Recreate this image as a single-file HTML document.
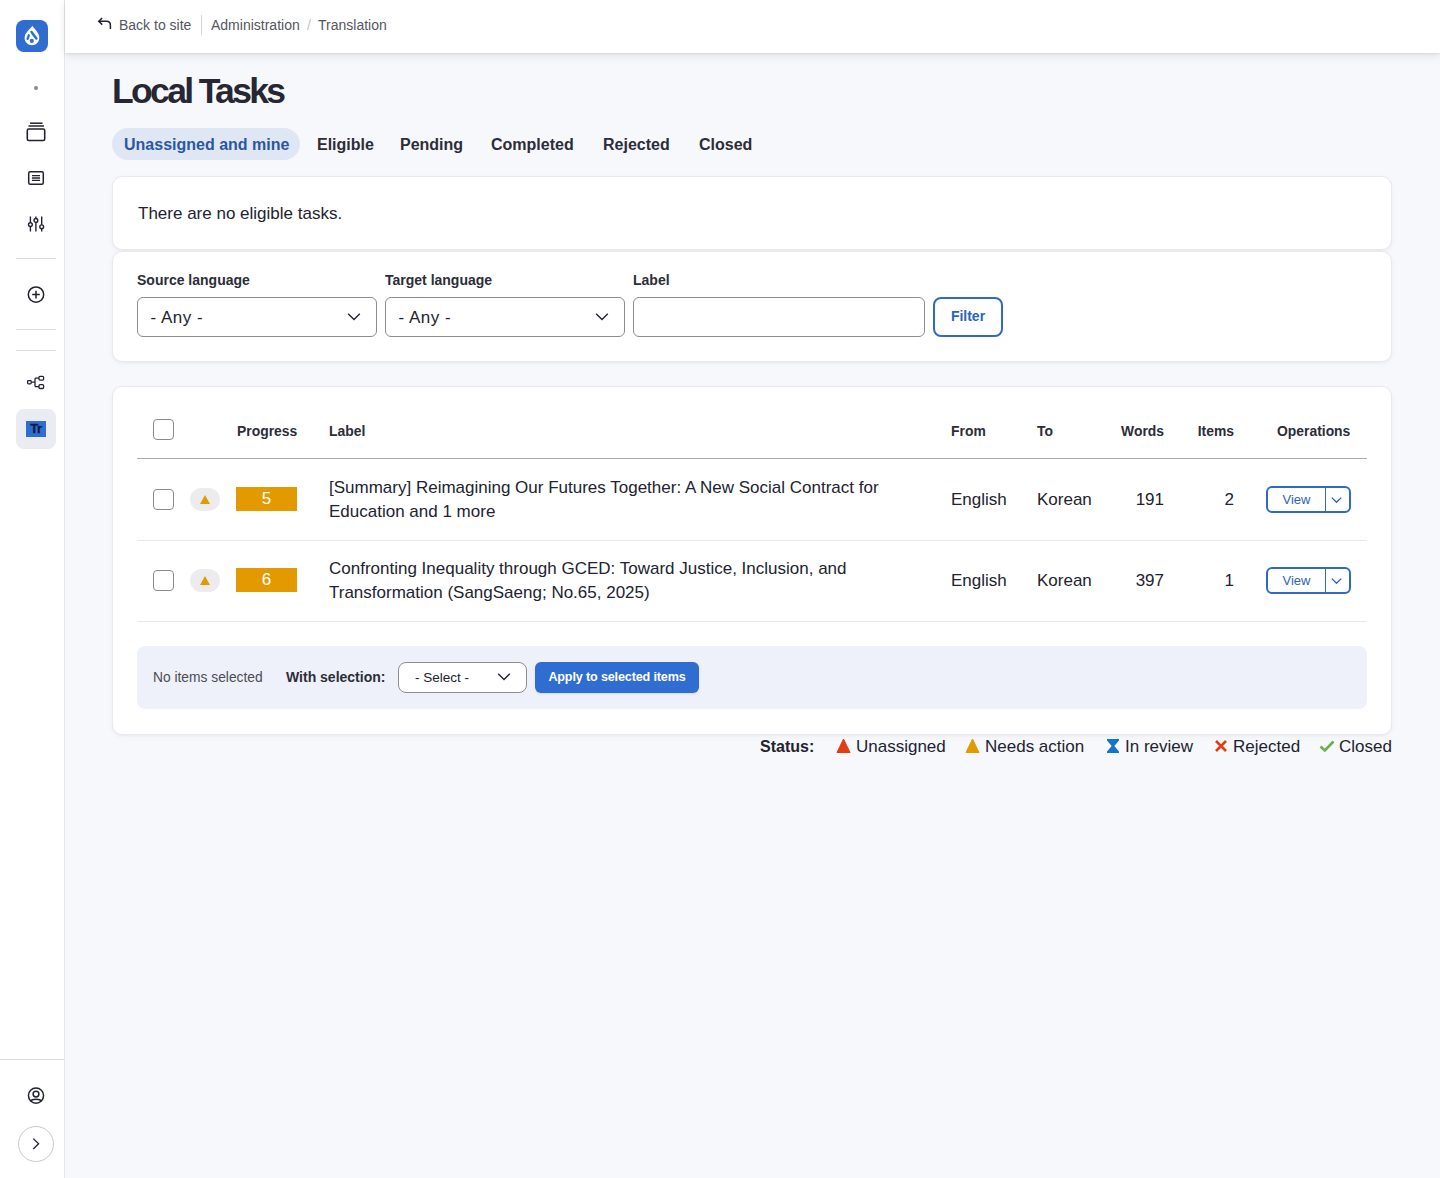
<!DOCTYPE html>
<html><head><meta charset="utf-8">
<style>
*{box-sizing:border-box;margin:0;padding:0}
html,body{width:1440px;height:1178px;overflow:hidden}
body{background:#f7f8fc;font-family:"Liberation Sans",sans-serif;color:#222330;position:relative}
.abs{position:absolute;white-space:nowrap}
#sb{position:absolute;left:0;top:0;width:64px;height:1178px;background:#fff}
#sbline{position:absolute;left:64px;top:0;width:1px;height:1178px;background:#e6e7ed}
#hdr{position:absolute;left:65px;top:0;width:1375px;height:53px;background:#fff;box-shadow:0 1px 2px rgba(0,0,0,.08),0 3px 9px rgba(0,0,0,.09)}
.card{position:absolute;left:112px;width:1280px;background:#fff;border:1px solid #e8e9ee;border-radius:10px;box-shadow:0 1px 2px rgba(0,0,0,.04),0 2px 6px rgba(0,0,0,.03)}
.hsep{position:absolute;left:16px;width:40px;height:1px;background:#dcdcdf}
.lbl{font-size:14px;line-height:18px;font-weight:bold;color:#2c2d38}
.sel{position:absolute;height:40px;border:1px solid #8d8d90;border-radius:6px;background:#fff}
.sel span{position:absolute;left:12.5px;top:1px;font-size:17px;line-height:38px;white-space:nowrap;letter-spacing:.5px}
.chev{position:absolute}
.cb{position:absolute;width:21px;height:21px;border:1px solid #8a8a8d;border-radius:4px;background:#fff}
.th{font-size:13.9px;line-height:18px;font-weight:bold;color:#2c2d38}
.td{font-size:17px;line-height:24px;color:#222330}
.pill{position:absolute;width:30px;height:23px;border-radius:12px;background:#ececee;display:flex;align-items:center;justify-content:center}
.prog{position:absolute;width:61px;height:24px;background:#e29a00;color:#fff;font-size:17px;line-height:24px;text-align:center}
.vbtn{position:absolute;width:85px;height:27px;border:2px solid #3169c9;border-radius:6px;background:#fff}
.vbtn span{position:absolute;left:0;width:57px;top:0;text-align:center;font-size:13px;line-height:23px;color:#2c63bd}
.vbtn i{position:absolute;left:57px;top:0;width:1px;height:23px;background:#3169c9}
.leg{font-size:17px;line-height:20px;color:#222330}
</style></head>
<body>
<div id="sb">
  <!-- logo -->
  <svg class="abs" style="left:16px;top:20px" width="32" height="32" viewBox="0 0 32 32">
    <rect width="32" height="32" rx="8" fill="#2f6dd0"/>
    <path d="M16.4 5.8 C17.6 8.6 23.3 12.4 23.3 18.1 C23.3 22.1 20.1 25.3 16 25.3 C11.9 25.3 8.6 22.1 8.6 18.1 C8.6 12.4 15.1 8.6 16.4 5.8 Z" fill="#fff"/>
    <path d="M15.5 12.1 L20.3 18.4" stroke="#2f6dd0" stroke-width="2.5" stroke-linecap="round"/>
    <path d="M12.8 15.3 L11.6 18.9" stroke="#2f6dd0" stroke-width="2.3" stroke-linecap="round"/>
    <circle cx="15.8" cy="20.9" r="2.1" fill="#2f6dd0"/>
  </svg>
  <div class="abs" style="left:34px;top:86px;width:4px;height:4px;border-radius:2px;background:#8a8b93"></div>
  <!-- content icon -->
  <svg class="abs" style="left:25px;top:121px" width="22" height="22" viewBox="0 0 22 22" fill="none" stroke="#222330">
    <path d="M5 2.2 H17.5" stroke-width="1.5"/>
    <path d="M3.5 5 H19" stroke-width="1.5"/>
    <rect x="2.3" y="8" width="17.4" height="11.5" rx="1.5" stroke-width="1.6"/>
  </svg>
  <!-- list icon -->
  <svg class="abs" style="left:26px;top:168px" width="20" height="20" viewBox="0 0 20 20" fill="none" stroke="#222330">
    <rect x="2.7" y="3.7" width="14.6" height="12.6" rx="1.5" stroke-width="1.5"/>
    <path d="M6 7.7 H14 M6 10 H14 M6 12.4 H14" stroke-width="1.3"/>
  </svg>
  <!-- sliders icon -->
  <svg class="abs" style="left:26px;top:214px" width="20" height="20" viewBox="0 0 20 20" fill="none" stroke="#222330" stroke-width="1.4">
    <path d="M4.4 2.5 V8.7 M4.4 12.5 V17.5 M9.9 2.5 V4.5 M9.9 8.3 V17.5 M15.7 2.5 V10.8 M15.7 14.7 V17.5"/>
    <circle cx="4.4" cy="10.6" r="1.9"/>
    <circle cx="9.9" cy="6.4" r="1.9"/>
    <circle cx="15.7" cy="12.8" r="1.9"/>
  </svg>
  <div class="hsep" style="top:258px"></div>
  <!-- plus circle -->
  <svg class="abs" style="left:26px;top:285px" width="20" height="20" viewBox="0 0 20 20" fill="none" stroke="#222330" stroke-width="1.5">
    <circle cx="10" cy="9.6" r="7.7"/>
    <path d="M10 5.8 V13.4 M6.2 9.6 H13.8"/>
  </svg>
  <div class="hsep" style="top:329px"></div>
  <div class="hsep" style="top:350px"></div>
  <!-- tree icon -->
  <svg class="abs" style="left:26px;top:373px" width="20" height="20" viewBox="0 0 20 20" fill="none" stroke="#222330" stroke-width="1.3">
    <rect x="1.6" y="7.6" width="3.6" height="3.2" rx=".8"/>
    <rect x="13" y="3.3" width="4.6" height="3.8" rx="1"/>
    <rect x="13" y="11.7" width="4.6" height="3.8" rx="1"/>
    <path d="M5.2 9.2 H9 M9 5.2 V13.6 M9 5.2 H13 M9 13.6 H13"/>
  </svg>
  <!-- active Tr -->
  <div class="abs" style="left:16px;top:409px;width:40px;height:40px;border-radius:8px;background:#ebecf1"></div>
  <div class="abs" style="left:26px;top:421px;width:20px;height:16px;background:#2f6dd0;color:#0b1c48;font-weight:bold;font-size:13px;line-height:16px;text-align:center;letter-spacing:-.4px;-webkit-text-stroke:.3px #0b1c48">Tr</div>
  <!-- bottom -->
  <div class="abs" style="left:0;top:1059px;width:64px;height:1px;background:#dcdcdf"></div>
  <svg class="abs" style="left:26px;top:1086px" width="20" height="20" viewBox="0 0 20 20" fill="none" stroke="#222330" stroke-width="1.5">
    <circle cx="10" cy="9.6" r="7.6"/>
    <circle cx="10" cy="8.1" r="2.9"/>
    <path d="M4.6 15.3 C5.8 12.6 14.2 12.6 15.4 15.3"/>
  </svg>
  <div class="abs" style="left:18px;top:1126px;width:36px;height:36px;border-radius:50%;border:1px solid #c9cacf;background:#fff"></div>
  <svg class="abs" style="left:26px;top:1134px" width="20" height="20" viewBox="0 0 20 20" fill="none" stroke="#222330" stroke-width="1.3">
    <path d="M7.3 4.6 L12.6 9.8 L7.3 15"/>
  </svg>
</div>
<div id="sbline"></div>

<div id="hdr"></div>
<svg class="abs" style="left:96px;top:15px" width="18" height="18" viewBox="0 0 18 18" fill="none" stroke="#222330" stroke-width="1.5">
  <path d="M6.2 3 L2.8 6.3 L6.2 9.6"/>
  <path d="M2.8 6.3 H10.5 C13 6.3 14.4 7.8 14.4 10.2 V14"/>
</svg>
<div class="abs" style="left:119px;top:16px;font-size:14px;line-height:18px;color:#55565e">Back to site</div>
<div class="abs" style="left:201px;top:15px;width:1px;height:20px;background:#d5d6dc"></div>
<div class="abs" style="left:211px;top:16px;font-size:14px;line-height:18px;color:#55565e">Administration</div>
<div class="abs" style="left:307px;top:16px;font-size:14px;line-height:18px;color:#c4c5ca">/</div>
<div class="abs" style="left:318px;top:16px;font-size:14px;line-height:18px;color:#55565e">Translation</div>

<!-- title -->
<div class="abs" style="left:112px;top:71px;font-size:35.5px;line-height:40px;font-weight:bold;color:#262733;letter-spacing:-2.65px">Local Tasks</div>

<!-- tabs -->
<div class="abs" style="left:112px;top:128px;width:188px;height:32px;border-radius:16px;background:#dfe6f4"></div>
<div class="abs" style="left:124px;top:136px;font-size:16px;line-height:18px;font-weight:bold;color:#2b579f">Unassigned and mine</div>
<div class="abs" style="left:317px;top:136px;font-size:16px;line-height:18px;font-weight:bold;color:#2c2d38">Eligible</div>
<div class="abs" style="left:400px;top:136px;font-size:16px;line-height:18px;font-weight:bold;color:#2c2d38">Pending</div>
<div class="abs" style="left:491px;top:136px;font-size:16px;line-height:18px;font-weight:bold;color:#2c2d38">Completed</div>
<div class="abs" style="left:603px;top:136px;font-size:16px;line-height:18px;font-weight:bold;color:#2c2d38">Rejected</div>
<div class="abs" style="left:699px;top:136px;font-size:16px;line-height:18px;font-weight:bold;color:#2c2d38">Closed</div>

<!-- card 1 -->
<div class="card" style="top:176px;height:74px"></div>
<div class="abs" style="left:138px;top:204px;font-size:17px;line-height:20px">There are no eligible tasks.</div>

<!-- card 2 -->
<div class="card" style="top:251px;height:111px"></div>

<!-- card 3 -->
<div class="card" style="top:386px;height:349px"></div>


<!-- filter form -->
<div class="abs lbl" style="left:137px;top:271px">Source language</div>
<div class="abs lbl" style="left:385px;top:271px">Target language</div>
<div class="abs lbl" style="left:633px;top:271px">Label</div>
<div class="sel" style="left:137px;top:297px;width:240px"><span>- Any -</span>
  <svg class="chev" style="left:206.5px;top:10px" width="18" height="18" viewBox="0 0 18 18" fill="none" stroke="#222330" stroke-width="1.4"><path d="M3.2 5.8 L9 11.6 L14.8 5.8"/></svg></div>
<div class="sel" style="left:385px;top:297px;width:240px"><span>- Any -</span>
  <svg class="chev" style="left:206.5px;top:10px" width="18" height="18" viewBox="0 0 18 18" fill="none" stroke="#222330" stroke-width="1.4"><path d="M3.2 5.8 L9 11.6 L14.8 5.8"/></svg></div>
<div class="sel" style="left:633px;top:297px;width:292px"></div>
<div class="abs" style="left:933px;top:297px;width:70px;height:40px;border:2px solid #3169c9;border-radius:8px;background:#fff;color:#2c63bd;font-size:14px;font-weight:bold;line-height:34px;text-align:center">Filter</div>

<!-- table -->
<div class="abs" style="left:137px;top:458px;width:1230px;height:1px;background:#a9a9ab"></div>
<div class="abs" style="left:137px;top:540px;width:1230px;height:1px;background:#e8e8e9"></div>
<div class="abs" style="left:137px;top:621px;width:1230px;height:1px;background:#e8e8e9"></div>
<div class="cb" style="left:153px;top:419px"></div>
<div class="abs th" style="left:237px;top:422px">Progress</div>
<div class="abs th" style="left:329px;top:422px">Label</div>
<div class="abs th" style="left:951px;top:422px">From</div>
<div class="abs th" style="left:1037px;top:422px">To</div>
<div class="abs th" style="right:276px;top:422px">Words</div>
<div class="abs th" style="right:206px;top:422px">Items</div>
<div class="abs th" style="left:1277px;top:422px">Operations</div>

<div class="cb" style="left:153px;top:489px"></div>
<div class="pill" style="left:190px;top:488px"><svg width="10" height="9" viewBox="0 0 10 9"><path d="M5 0 L10 9 L0 9 Z" fill="#e29a00"/></svg></div>
<div class="prog" style="left:236px;top:487px">5</div>
<div class="abs td" style="left:329px;top:476px;line-height:24px">[Summary] Reimagining Our Futures Together: A New Social Contract for<br>Education and 1 more</div>
<div class="abs td" style="left:951px;top:488px">English</div>
<div class="abs td" style="left:1037px;top:488px">Korean</div>
<div class="abs td" style="right:276px;top:488px">191</div>
<div class="abs td" style="right:206px;top:488px">2</div>
<div class="vbtn" style="left:1266px;top:486px"><span>View</span><i></i>
  <svg class="abs" style="left:61.5px;top:6px" width="13" height="12" viewBox="0 0 13 12" fill="none" stroke="#2c63bd" stroke-width="1.3"><path d="M1.8 3.6 L6.5 8.3 L11.2 3.6"/></svg></div>

<div class="cb" style="left:153px;top:570px"></div>
<div class="pill" style="left:190px;top:569px"><svg width="10" height="9" viewBox="0 0 10 9"><path d="M5 0 L10 9 L0 9 Z" fill="#e29a00"/></svg></div>
<div class="prog" style="left:236px;top:568px">6</div>
<div class="abs td" style="left:329px;top:557px;line-height:24px">Confronting Inequality through GCED: Toward Justice, Inclusion, and<br>Transformation (SangSaeng; No.65, 2025)</div>
<div class="abs td" style="left:951px;top:569px">English</div>
<div class="abs td" style="left:1037px;top:569px">Korean</div>
<div class="abs td" style="right:276px;top:569px">397</div>
<div class="abs td" style="right:206px;top:569px">1</div>
<div class="vbtn" style="left:1266px;top:567px"><span>View</span><i></i>
  <svg class="abs" style="left:61.5px;top:6px" width="13" height="12" viewBox="0 0 13 12" fill="none" stroke="#2c63bd" stroke-width="1.3"><path d="M1.8 3.6 L6.5 8.3 L11.2 3.6"/></svg></div>

<!-- bulk -->
<div class="abs" style="left:137px;top:646px;width:1230px;height:63px;border-radius:8px;background:#eef1f9"></div>
<div class="abs" style="left:153px;top:670px;font-size:13.8px;line-height:16px;color:#4b4c55">No items selected</div>
<div class="abs" style="left:286px;top:668px;font-size:14px;line-height:18px;font-weight:bold;color:#2c2d38">With selection:</div>
<div class="sel" style="left:398px;top:662px;width:129px;height:31px;border-radius:8px"><span style="left:16px;top:0;font-size:13.5px;line-height:29px;letter-spacing:0">- Select -</span>
  <svg class="chev" style="left:96px;top:5px" width="18" height="18" viewBox="0 0 18 18" fill="none" stroke="#222330" stroke-width="1.4"><path d="M3.2 5.8 L9 11.6 L14.8 5.8"/></svg></div>
<div class="abs" style="left:535px;top:662px;width:164px;height:31px;border-radius:6px;background:#2f6dd0;color:#fff;font-size:12.6px;font-weight:bold;line-height:31px;text-align:center;letter-spacing:-.15px;box-shadow:0 1px 2px rgba(0,0,0,.1)">Apply to selected items</div>

<!-- status legend -->
<div class="abs leg" style="left:760px;top:737px;font-weight:bold;font-size:16px">Status:</div>
<svg class="abs" style="left:836px;top:738px" width="15" height="15" viewBox="0 0 15 15"><path d="M7.5 1 L14 14.5 L1 14.5 Z" fill="#e33d14" stroke="#e33d14" stroke-width="1" stroke-linejoin="round"/></svg>
<div class="abs leg" style="left:856px;top:737px">Unassigned</div>
<svg class="abs" style="left:965px;top:738px" width="15" height="15" viewBox="0 0 15 15"><path d="M7.5 1 L14 14.5 L1 14.5 Z" fill="#e29a00" stroke="#e29a00" stroke-width="1" stroke-linejoin="round"/></svg>
<div class="abs leg" style="left:985px;top:737px">Needs action</div>
<svg class="abs" style="left:1106px;top:738px" width="14" height="16" viewBox="0 0 14 16"><path d="M1 1 H13 V2.5 L8.3 8 L13 13.5 V15 H1 V13.5 L5.7 8 L1 2.5 Z" fill="#1474c8"/></svg>
<div class="abs leg" style="left:1125px;top:737px">In review</div>
<svg class="abs" style="left:1214px;top:739px" width="14" height="14" viewBox="0 0 14 14"><path d="M2 2 L12 12 M12 2 L2 12" stroke="#e33d14" stroke-width="2.6"/></svg>
<div class="abs leg" style="left:1233px;top:737px">Rejected</div>
<svg class="abs" style="left:1319px;top:739px" width="16" height="14" viewBox="0 0 16 14"><path d="M1.5 7.5 L5.8 11.5 L14.5 2.5" stroke="#6cb14e" stroke-width="2.6" fill="none"/></svg>
<div class="abs leg" style="left:1339px;top:737px">Closed</div>
</body></html>
